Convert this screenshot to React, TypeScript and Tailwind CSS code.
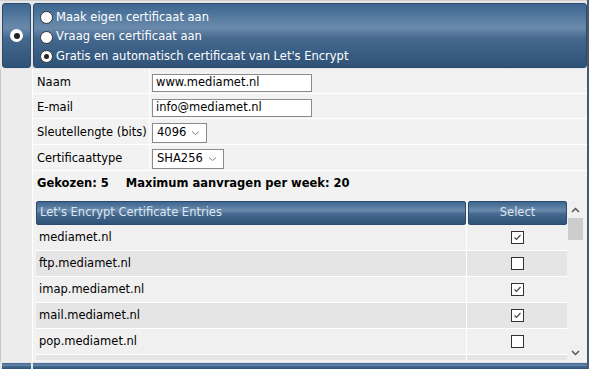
const hdr =
  'bg-[linear-gradient(to_bottom,#3e6690_0%,#5a7ea3_25%,#6a8aab_38%,#45688f_55%,#2f5278_100%)]'

const Radio = ({ on }: { on?: boolean }) => (
  <span className="w-[13px] h-[13px] rounded-full bg-white border border-[#333] flex items-center justify-center shrink-0">
    {on && <span className="w-[5px] h-[5px] rounded-full bg-[#222]" />}
  </span>
)

const Check = ({ on }: { on?: boolean }) => (
  <span className="w-[13px] h-[13px] bg-white border border-[#333] flex items-center justify-center">
    {on && (
      <svg width="9" height="9" viewBox="0 0 9 9">
        <path d="M1.5 4.5 L3.5 6.5 L7.5 2" stroke="#444" strokeWidth="1.2" fill="none" />
      </svg>
    )}
  </span>
)

const Chevron = () => (
  <svg width="9" height="6" viewBox="0 0 9 6" className="ml-auto mr-[6px]">
    <path d="M1 1.5 L4.5 4.5 L8 1.5" stroke="#888" strokeWidth="1" fill="none" />
  </svg>
)

const rows = [
  { name: 'mediamet.nl', on: true },
  { name: 'ftp.mediamet.nl', on: false },
  { name: 'imap.mediamet.nl', on: true },
  { name: 'mail.mediamet.nl', on: true },
  { name: 'pop.mediamet.nl', on: false },
]

const FormRow = ({ label, h, children }: { label: string; h: string; children: React.ReactNode }) => (
  <div className={`flex ${h} border-b border-white`}>
    <div className="w-[117px] pl-[4px] pt-[3px] flex items-center border-r border-white">{label}</div>
    <div className="flex-1 flex items-center pl-[2px] pt-[3px]">{children}</div>
  </div>
)

export default function App() {
  return (
    <div
      className="w-[589px] h-[369px] overflow-hidden bg-[#f2f2f2] text-[11.5px] text-black border-r-[2px] border-[#4a5a6c] flex flex-col"
      style={{ fontFamily: '"DejaVu Sans", Verdana, sans-serif' }}
    >
      <div className="flex h-[69px] shrink-0 bg-[#e6e6e6] pt-[2px] pb-[1px] border-t border-[#d0d0d0]">
        <div className={`w-[29px] ml-[2px] rounded-[3px] ${hdr} flex items-center justify-center border border-[#2c4a6c]`}>
          <span className="w-[13px] h-[13px] rounded-full bg-white flex items-center justify-center">
            <span className="w-[6px] h-[6px] rounded-full bg-[#222]" />
          </span>
        </div>
        <div className={`flex-1 ml-[2px] rounded-[3px] ${hdr} border border-[#2c4a6c] text-white flex flex-col justify-center gap-[2px] pl-[6px] pt-[3px]`}>
          <div className="flex items-center gap-[3px]"><Radio /><span>Maak eigen certificaat aan</span></div>
          <div className="flex items-center gap-[3px]"><Radio /><span>Vraag een certificaat aan</span></div>
          <div className="flex items-center gap-[3px]"><Radio on /><span>Gratis en automatisch certificaat van Let's Encrypt</span></div>
        </div>
      </div>

      <div className="flex flex-1 min-h-0">
        <div className="w-[33px] shrink-0 bg-[#ececec] border-r border-white border-l border-l-[#c8c8c8]" />
        <div className="flex-1 flex flex-col min-w-0">
          <FormRow label="Naam" h="h-[25px]">
            <div className="w-[160px] h-[18px] border border-[#8a8a8a] bg-white px-[3px] flex items-center">www.mediamet.nl</div>
          </FormRow>
          <FormRow label="E-mail" h="h-[25px]">
            <div className="w-[160px] h-[18px] border border-[#8a8a8a] bg-white px-[3px] flex items-center">info@mediamet.nl</div>
          </FormRow>
          <FormRow label="Sleutellengte (bits)" h="h-[26px]">
            <div className="w-[55px] h-[20px] border border-[#8a8a8a] bg-white pl-[4px] flex items-center">4096<Chevron /></div>
          </FormRow>
          <FormRow label="Certificaattype" h="h-[26px]">
            <div className="w-[72px] h-[20px] border border-[#8a8a8a] bg-white pl-[4px] flex items-center">SHA256<Chevron /></div>
          </FormRow>
          <div className="h-[26px] flex items-center pl-[4px] font-bold gap-[17px]">
            <span>Gekozen: 5</span>
            <span>Maximum aanvragen per week: 20</span>
          </div>
          <div className="flex pl-[3px] pr-[3px] pt-[4px] pb-[2px] min-h-0 flex-1">
            <div className="flex-1 flex flex-col min-w-0 overflow-hidden">
              <div className="flex h-[24px] shrink-0 text-[#dde6ef]">
                <div className={`flex-1 ${hdr} rounded-[2px] border border-[#2c4a6c] flex items-center pl-[3px]`}>
                  Let's Encrypt Certificate Entries
                </div>
                <div className={`w-[99px] ml-[2px] ${hdr} rounded-[2px] border border-[#2c4a6c] flex items-center justify-center`}>
                  Select
                </div>
              </div>
              {rows.map((r, i) => (
                <div
                  key={r.name}
                  className={`flex h-[26px] shrink-0 border-b border-white ${i % 2 ? 'bg-[#e5e5e5]' : 'bg-[#f0f0f0]'}`}
                >
                  <div className="flex-1 flex items-center pl-[3px] border-r border-white">{r.name}</div>
                  <div className="w-[100px] flex items-center justify-center">
                    <Check on={r.on} />
                  </div>
                </div>
              ))}
              <div className="flex h-[26px] shrink-0 bg-[#e5e5e5]">
                <div className="flex-1 border-r border-white" />
                <div className="w-[100px]" />
              </div>
            </div>
            <div className="w-[17px] bg-[#f0f0f0] flex flex-col items-center">
              <svg width="9" height="6" viewBox="0 0 9 6" className="mt-[6px]">
                <path d="M1 5 L4.5 1.5 L8 5" stroke="#555" strokeWidth="1.5" fill="none" />
              </svg>
              <div className="w-[15px] h-[22px] bg-[#cdcdcd] mt-[5px]" />
              <svg width="9" height="6" viewBox="0 0 9 6" className="mt-auto mb-[4px]">
                <path d="M1 1 L4.5 4.5 L8 1" stroke="#555" strokeWidth="1.5" fill="none" />
              </svg>
            </div>
          </div>
        </div>
      </div>
      <div className="flex h-[7px] shrink-0 bg-[#e6e6e6] pt-[1px]">
        <div className={`w-[29px] ml-[2px] ${hdr}`} />
        <div className={`flex-1 ml-[2px] ${hdr}`} />
      </div>
    </div>
  )
}
